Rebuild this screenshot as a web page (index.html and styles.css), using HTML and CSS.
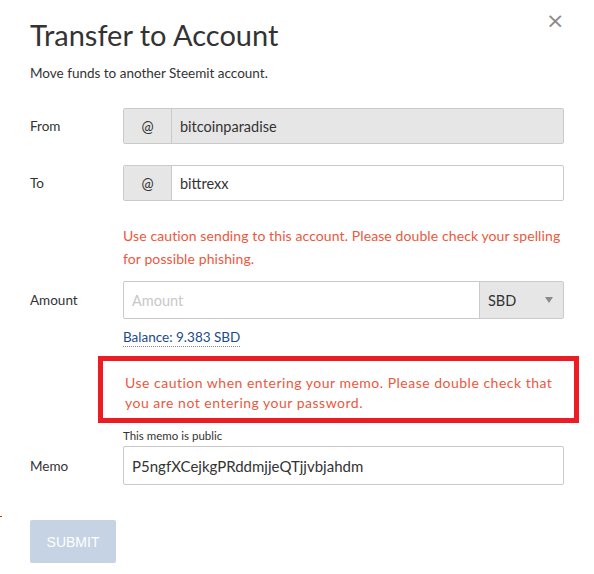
FILE: index.html
```html
<!DOCTYPE html>
<html>
	<head>
		<title>Transfer to Account</title>
		<link rel="stylesheet" href="styles.css">
	</head>
	<body>
		<div class="dialog">
			<span class="close">&times;</span>
			<h1 class="title">Transfer to Account</h1>
			<p class="subtitle">Move funds to another Steemit account.</p>

			<div class="row rowFrom">
				<label class="label">From</label>
				<div class="field group disabled">
					<span class="addon">@</span>
					<span class="value">bitcoinparadise</span>
				</div>
			</div>

			<div class="row rowTo">
				<label class="label">To</label>
				<div class="field group">
					<span class="addon">@</span>
					<span class="value">bittrexx</span>
				</div>
			</div>

			<div class="row">
				<div class="label"></div>
				<div class="warning">Use caution sending to this account. Please double check your spelling for possible phishing.</div>
			</div>

			<div class="row rowAmount">
				<label class="label">Amount</label>
				<div class="field group">
					<span class="value placeholder">Amount</span>
					<span class="select">SBD<span class="caret"></span></span>
				</div>
			</div>

			<div class="row">
				<div class="label"></div>
				<a class="balance">Balance: 9.383 SBD</a>
			</div>

			<div class="memoWarning">Use caution when entering your memo. Please double check that you are not entering your password.</div>

			<div class="row">
				<div class="label"></div>
				<div class="hint">This memo is public</div>
			</div>

			<div class="row rowMemo">
				<label class="label">Memo</label>
				<div class="field memo">P5ngfXCejkgPRddmjjeQTjjvbjahdm</div>
			</div>

			<button class="submit">SUBMIT</button>
		</div>
		<span class="tick"></span>
	</body>
</html>
```

FILE: styles.css
```css
body
	{
		margin: 0;
		background-color: #ffffff;
		font-family: "Source Sans Pro", "Lato", "Noto Sans", sans-serif;
		color: #333333;
	}
.dialog
	{
		position: relative;
		width: 534px;
		padding: 0 0 0 30px;
	}
.close
	{
		position: absolute;
		top: 8px;
		left: 546px;
		font-family: "DejaVu Sans", sans-serif;
		font-size: 22px;
		color: #8a8a8a;
	}
.title
	{
		margin: 0;
		padding-top: 17px;
		font-size: 29px;
		font-weight: normal;
		line-height: 36px;
	}
.subtitle
	{
		margin: 10px 0 0 0;
		font-size: 13.5px;
		line-height: 20px;
	}
.row
	{
		display: flex;
		align-items: center;
	}
.label
	{
		flex: 0 0 93px;
		font-size: 13.5px;
	}
.rowFrom
	{
		margin-top: 25px;
	}
.rowTo
	{
		margin-top: 21px;
	}
.rowAmount
	{
		margin-top: 11px;
	}
.rowMemo
	{
		margin-top: 2px;
	}
.field
	{
		flex: 1;
		height: 34px;
		border: 1px solid #cacaca;
		border-radius: 2px;
		font-size: 14.5px;
		box-sizing: content-box;
	}
.group
	{
		display: flex;
		align-items: stretch;
	}
.disabled
	{
		background-color: #e6e6e6;
	}
.addon
	{
		width: 47px;
		display: flex;
		align-items: center;
		justify-content: center;
		background-color: #e6e6e6;
		border-right: 1px solid #cacaca;
	}
.value
	{
		flex: 1;
		display: flex;
		align-items: center;
		padding-left: 8px;
	}
.placeholder
	{
		color: #c8c8c8;
	}
.rowAmount .field
	{
		height: 36px;
	}
.select
	{
		width: 65px;
		display: flex;
		align-items: center;
		justify-content: space-between;
		padding: 0 10px 0 8px;
		background-color: #e6e6e6;
		border-left: 1px solid #cacaca;
	}
.caret
	{
		width: 0;
		height: 0;
		border-left: 4px solid transparent;
		border-right: 4px solid transparent;
		border-top: 6px solid #8a8a8a;
	}
.warning
	{
		flex: 1;
		margin-top: 23px;
		color: #ec5840;
		font-size: 14px;
		letter-spacing: 0.1px;
		line-height: 23px;
	}
.balance
	{
		margin-top: 9px;
		color: #1a4b8c;
		font-size: 13.5px;
		line-height: 18px;
		border-bottom: 1px dotted #8a8a8a;
	}
.memoWarning
	{
		width: 481px;
		margin: 9px 0 0 68px;
		padding: 12px 14px 5px 22px;
		border: 5px solid #ed1c24;
		color: #ec5840;
		font-size: 14px;
		letter-spacing: 0.5px;
		line-height: 20px;
		box-sizing: border-box;
	}
.hint
	{
		margin-top: 5px;
		font-size: 11.5px;
		line-height: 16px;
	}
.memo
	{
		display: flex;
		align-items: center;
		height: 37px;
		padding-left: 8px;
		font-size: 15px;
	}
.submit
	{
		display: block;
		margin-top: 35px;
		width: 86px;
		height: 43px;
		border: none;
		border-radius: 2px;
		background-color: #c5d3e4;
		color: #ffffff;
		font-family: "Liberation Sans", Arial, sans-serif;
		font-size: 14px;
	}
.tick
	{
		position: absolute;
		left: 0;
		top: 516px;
		width: 2px;
		height: 1px;
		background-color: #cc3300;
	}
```
